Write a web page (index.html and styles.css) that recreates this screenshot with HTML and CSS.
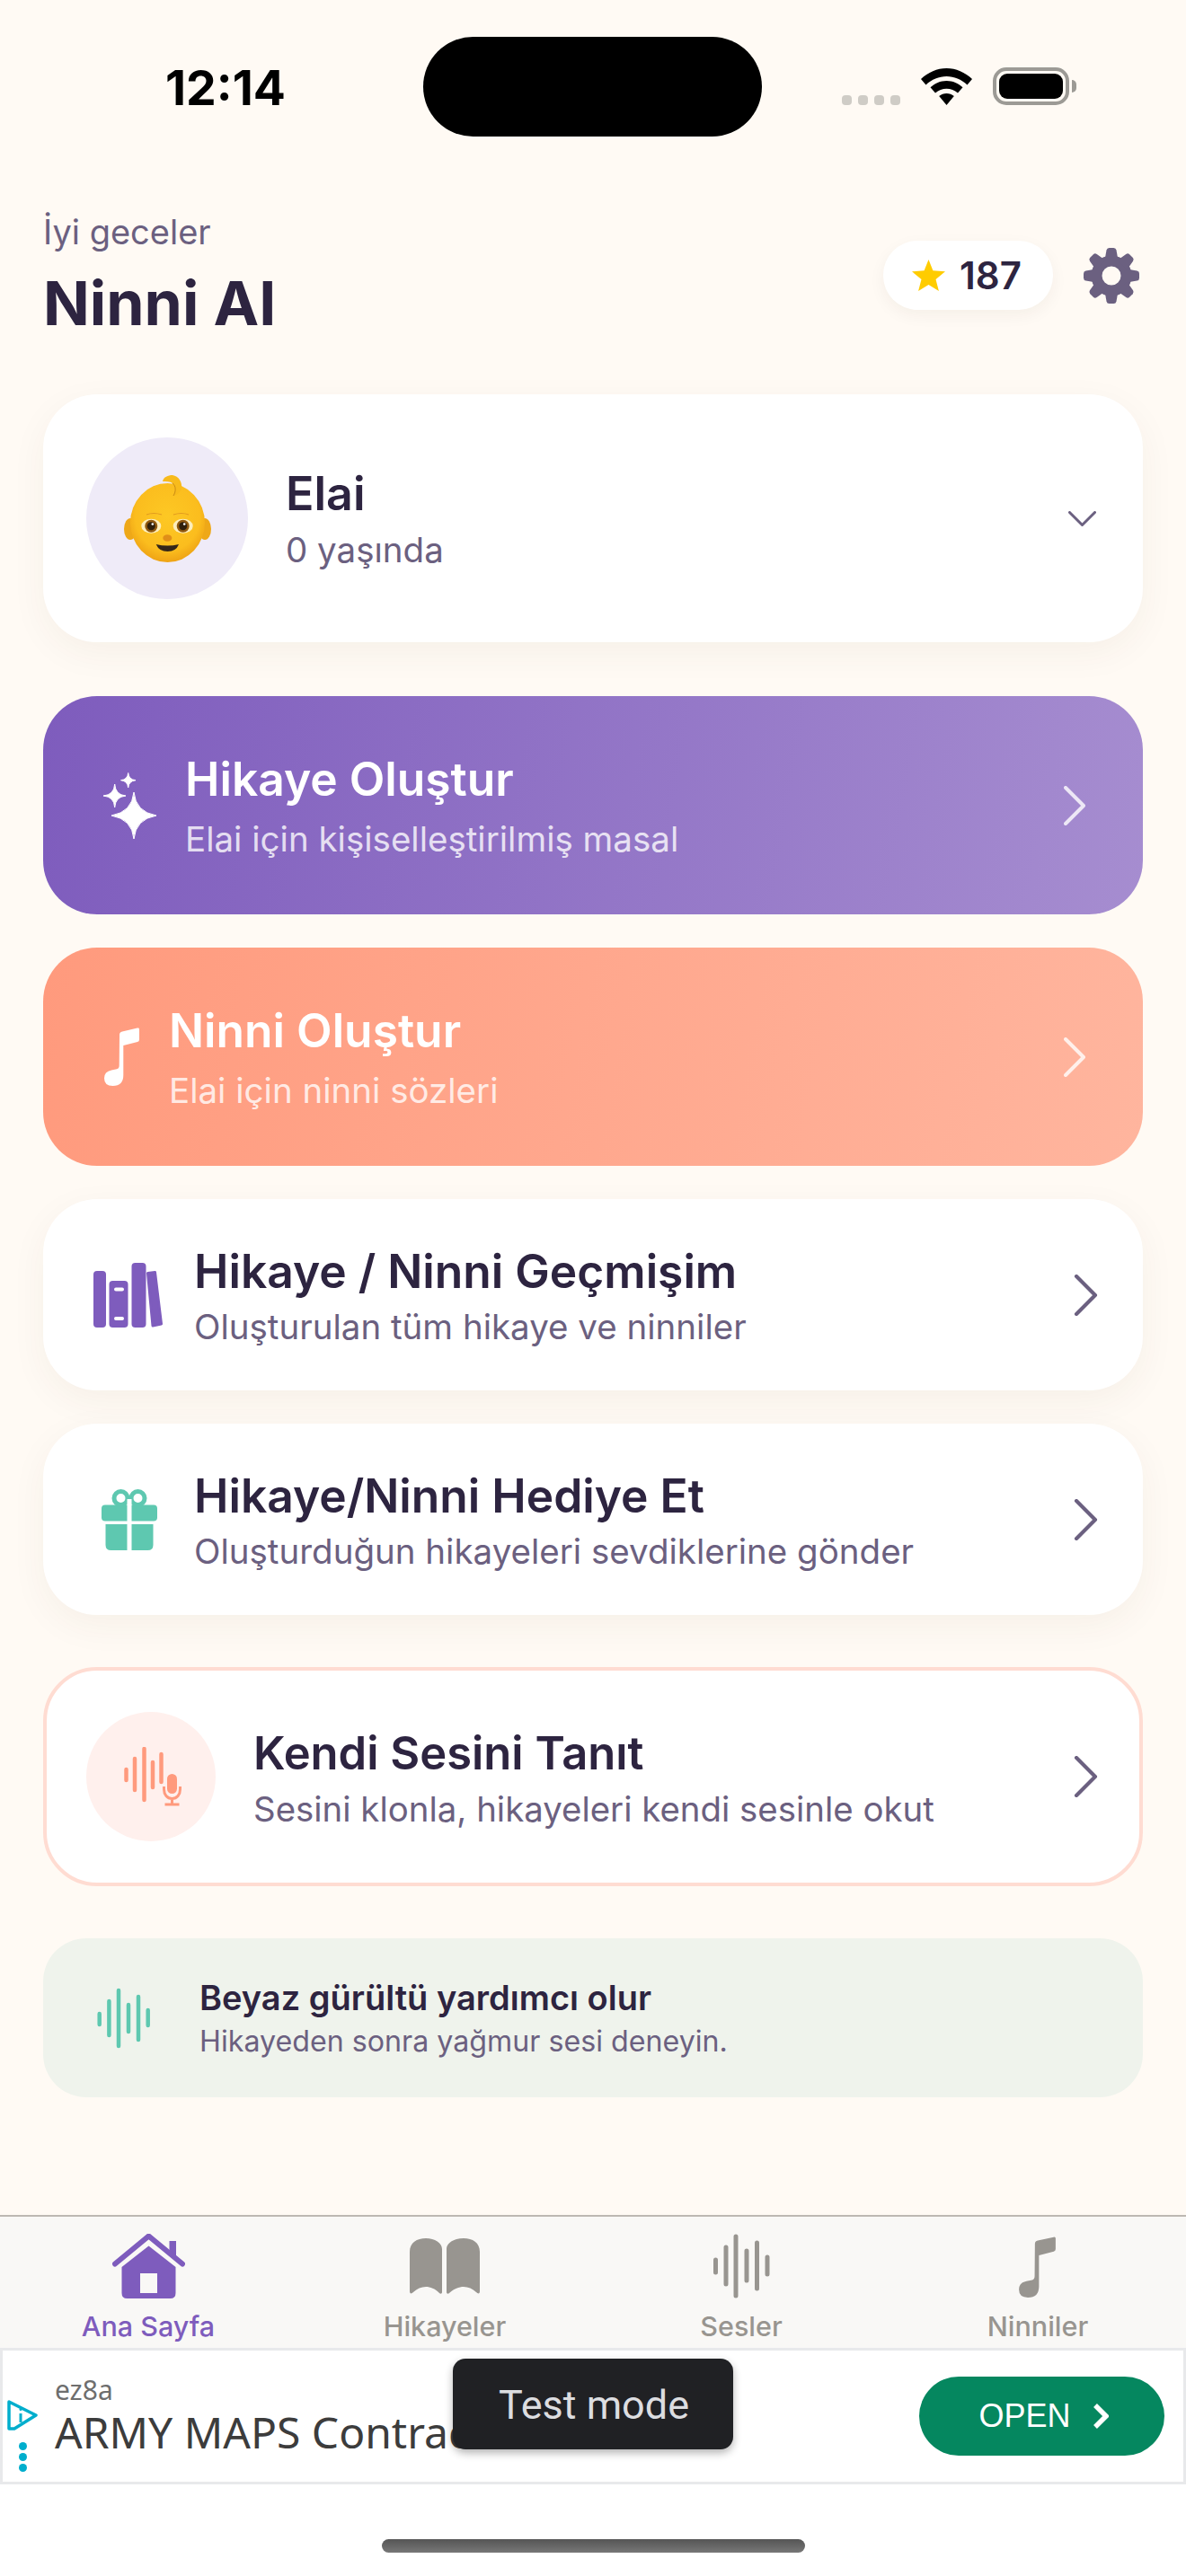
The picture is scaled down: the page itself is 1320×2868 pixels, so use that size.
FILE: index.html
```html
<!DOCTYPE html>
<html lang="tr">
<head>
    <meta charset="UTF-8">
    <meta name="viewport" content="width=device-width, initial-scale=1.0">
    <title>Ninni AI</title>
    <link rel="stylesheet" href="styles.css">
</head>
<body>
    <svg class="defs" width="0" height="0">
        <symbol id="note" viewBox="0 0 40 65">
            <path d="M17 8Q17 5 20 4.400L37 .6Q39 .2 39 2V13.500Q39 15.500 37 16L21.300 20V53Q21.300 65 9.500 65Q0 65 0 56.500Q0 49 8 47.500L14 46.300Q16.700 45.700 16.700 42Z"/>
        </symbol>
        <symbol id="chevron" viewBox="0 0 24 44">
            <path d="M2 2 22 22 2 42" fill="none" stroke="currentColor" stroke-width="4" stroke-linecap="round" stroke-linejoin="round"/>
        </symbol>
    </svg>

    <!-- status bar -->
    <div class="status">
        <div class="status-time">12:14</div>
        <div class="island"></div>
        <div class="status-icons">
            <div class="signal"><i></i><i></i><i></i><i></i></div>
            <svg class="wifi" viewBox="0 0 57 41">
                <path d="M28.500 0C39 0 49 4.500 57 12L51.500 18.500C45 12.500 37 9 28.500 9S12 12.500 5.500 18.500L0 12C8 4.500 18 0 28.500 0Z"/>
                <path d="M28.500 14C35.500 14 41.500 16.800 46.500 21.300L41 27.500C37.500 24.400 33 22.700 28.500 22.700S19.500 24.400 16 27.500L10.500 21.300C15.500 16.800 21.500 14 28.500 14Z"/>
                <path d="M28.500 28C31.500 28 34.500 29 36.800 31L28.500 41 20.200 31C22.500 29 25.500 28 28.500 28Z"/>
            </svg>
            <div class="battery"><div class="battery-fill"></div></div>
            <div class="battery-cap"></div>
        </div>
    </div>

    <main class="content">
        <header class="top">
            <div>
                <div class="greeting">İyi geceler</div>
                <h1 class="app-name">Ninni AI</h1>
            </div>
            <div class="top-actions">
                <div class="credits">
                    <svg class="star" viewBox="0 0 37 35"><path d="M18.500 0 23.400 12.300 37 13.300 26.500 22 29.900 35 18.500 28 7.100 35 10.500 22 0 13.300 13.600 12.300Z"/></svg>
                    <span>187</span>
                </div>
                <svg class="gear" viewBox="0 0 62 62">
                    <circle cx="31" cy="31" r="16.500" fill="none" stroke="#6b6080" stroke-width="12"/>
                    <g fill="#6b6080">
                        <path d="M23.500 14 25.500 2.500Q26 0 28.500 0H33.500Q36 0 36.500 2.500L38.500 14Z"/>
                        <path d="M23.500 14 25.500 2.500Q26 0 28.500 0H33.500Q36 0 36.500 2.500L38.500 14Z" transform="rotate(45 31 31)"/>
                        <path d="M23.500 14 25.500 2.500Q26 0 28.500 0H33.500Q36 0 36.500 2.500L38.500 14Z" transform="rotate(90 31 31)"/>
                        <path d="M23.500 14 25.500 2.500Q26 0 28.500 0H33.500Q36 0 36.500 2.500L38.500 14Z" transform="rotate(135 31 31)"/>
                        <path d="M23.500 14 25.500 2.500Q26 0 28.500 0H33.500Q36 0 36.500 2.500L38.500 14Z" transform="rotate(180 31 31)"/>
                        <path d="M23.500 14 25.500 2.500Q26 0 28.500 0H33.500Q36 0 36.500 2.500L38.500 14Z" transform="rotate(225 31 31)"/>
                        <path d="M23.500 14 25.500 2.500Q26 0 28.500 0H33.500Q36 0 36.500 2.500L38.500 14Z" transform="rotate(270 31 31)"/>
                        <path d="M23.500 14 25.500 2.500Q26 0 28.500 0H33.500Q36 0 36.500 2.500L38.500 14Z" transform="rotate(315 31 31)"/>
                    </g>
                </svg>
            </div>
        </header>

        <section class="card child-card">
            <div class="avatar">
                <svg class="baby" viewBox="0 0 97 98">
                    <defs>
                        <radialGradient id="skin" cx=".5" cy=".42" r=".62">
                            <stop offset="0" stop-color="#fdc824"/>
                            <stop offset=".7" stop-color="#fbbd1e"/>
                            <stop offset="1" stop-color="#eb9c12"/>
                        </radialGradient>
                    </defs>
                    <ellipse cx="7" cy="61" rx="7" ry="12" fill="#eea818"/>
                    <ellipse cx="90" cy="61" rx="7" ry="12" fill="#eea818"/>
                    <ellipse cx="48.500" cy="54" rx="41.500" ry="44" fill="url(#skin)"/>
                    <path d="M43 8C44 3 49 1 54 1 61 2 65 9 64 15 63 20 60 23 55 24 58 19 58 13 54 10 51 8 47 8 43 8Z" fill="#f8bb1c"/>
                    <path d="M55 24C58 19 58 13 54 10" fill="none" stroke="#c98a16" stroke-width="1"/>
                    <path d="M25 45Q33 42 42 45M55 45Q64 42 72 45" fill="none" stroke="#e09a20" stroke-width="1.200"/>
                    <ellipse cx="30.300" cy="57.700" rx="11" ry="8" fill="#fdeebc"/>
                    <ellipse cx="65.700" cy="57.700" rx="11" ry="8" fill="#fdeebc"/>
                    <circle cx="30.300" cy="57.700" r="7" fill="#90590f"/>
                    <circle cx="65.700" cy="57.700" r="7" fill="#90590f"/>
                    <circle cx="30.300" cy="57.700" r="4.500" fill="#2e1f0c"/>
                    <circle cx="65.700" cy="57.700" r="4.500" fill="#2e1f0c"/>
                    <circle cx="31.800" cy="55.500" r="1.300" fill="#fff"/>
                    <circle cx="67.200" cy="55.500" r="1.300" fill="#fff"/>
                    <ellipse cx="48.300" cy="71" rx="5" ry="3.800" fill="#e08f18"/>
                    <path d="M35.700 78Q48.500 81 61 78 58 86 48.500 86 39 86 35.700 78Z" fill="#33261a"/>
                </svg>
            </div>
            <div class="child-text">
                <div class="child-name">Elai</div>
                <div class="child-age">0 yaşında</div>
            </div>
            <svg class="chevron-down" viewBox="0 0 31 17"><path d="M1.500 1.500 15.500 15.500 29.500 1.500" fill="none" stroke="#6b6080" stroke-width="3" stroke-linecap="round" stroke-linejoin="round"/></svg>
        </section>

        <section class="cta cta-story">
            <svg class="cta-icon sparkles" viewBox="0 0 60 74" fill="#fff">
                <path d="M34 22Q36 44 59 48 36 52 34 74 32 52 9 48 32 44 34 22Z" stroke="#fff" stroke-width="1" stroke-linejoin="round"/>
                <path d="M12.700 13Q13.500 25 25 26 13.500 27 12.700 39 12 27 0 26 12 25 12.700 13Z" stroke="#fff" stroke-linejoin="round"/>
                <path d="M27.700 .500Q28.300 8 36 8.700 28.300 9.500 27.700 17 27 9.500 19.500 8.700 27 8 27.700 .500Z" stroke="#fff" stroke-linejoin="round"/>
            </svg>
            <div class="cta-text">
                <div class="cta-title">Hikaye Oluştur</div>
                <div class="cta-sub">Elai için kişiselleştirilmiş masal</div>
            </div>
            <svg class="chevron chevron-light"><use href="#chevron"/></svg>
        </section>

        <section class="cta cta-lullaby">
            <svg class="cta-icon note-icon" fill="#fff"><use href="#note"/></svg>
            <div class="cta-text">
                <div class="cta-title">Ninni Oluştur</div>
                <div class="cta-sub">Elai için ninni sözleri</div>
            </div>
            <svg class="chevron chevron-light"><use href="#chevron"/></svg>
        </section>

        <section class="card row-card row-history">
            <svg class="row-icon books" viewBox="0 0 77 72">
                <rect x="0" y="9" width="14" height="63" rx="4" fill="#7e5cbd"/>
                <rect x="17.500" y="20" width="21" height="52" rx="4" fill="#7e5cbd"/>
                <rect x="23" y="27.500" width="11" height="4" rx="2" fill="#fff"/>
                <rect x="23" y="60" width="11" height="4" rx="2" fill="#fff"/>
                <rect x="42.500" y="0" width="16" height="72" rx="4" fill="#7e5cbd"/>
                <path d="M60.500 11.500 68.500 10.500 75.500 68 66 70Z" fill="#7e5cbd" stroke="#7e5cbd" stroke-width="3" stroke-linejoin="round"/>
            </svg>
            <div class="row-text">
                <div class="row-title">Hikaye / Ninni Geçmişim</div>
                <div class="row-sub">Oluşturulan tüm hikaye ve ninniler</div>
            </div>
            <svg class="chevron chevron-dark"><use href="#chevron"/></svg>
        </section>

        <section class="card row-card row-gift">
            <svg class="row-icon gift" viewBox="0 0 62 68">
                <circle cx="21.500" cy="10" r="7.500" fill="none" stroke="#5ec8b0" stroke-width="5"/>
                <circle cx="40.500" cy="10" r="7.500" fill="none" stroke="#5ec8b0" stroke-width="5"/>
                <rect x="0" y="17.500" width="62" height="18" rx="4" fill="#5ec8b0"/>
                <path d="M4.500 39H57.500V62Q57.500 68 51.500 68H10.500Q4.500 68 4.500 62Z" fill="#5ec8b0"/>
                <rect x="28.500" y="11" width="5" height="57" fill="#fff"/>
            </svg>
            <div class="row-text">
                <div class="row-title">Hikaye/Ninni Hediye Et</div>
                <div class="row-sub">Oluşturduğun hikayeleri sevdiklerine gönder</div>
            </div>
            <svg class="chevron chevron-dark"><use href="#chevron"/></svg>
        </section>

        <section class="card voice-card">
            <div class="voice-badge">
                <svg class="voice-icon" viewBox="0 0 66 66">
                    <g fill="none" stroke="#ff9a7d" stroke-width="4.500" stroke-linecap="round">
                        <path d="M2.500 25V37M12 13V48M22.500 2V59M32 17V45M41.500 8V39"/>
                    </g>
                    <rect x="46" y="28" width="15" height="26" rx="7.500" fill="#fff0ed"/>
                    <rect x="48" y="30" width="11" height="22" rx="5.500" fill="#ff9a7d"/>
                    <path d="M44.500 44V47C44.500 53 48 57.500 53.500 57.500S62.500 53 62.500 47V44M53.500 57.500V63M45.500 64H61.500" fill="none" stroke="#ff9a7d" stroke-width="3"/>
                </svg>
            </div>
            <div class="row-text">
                <div class="row-title">Kendi Sesini Tanıt</div>
                <div class="row-sub">Sesini klonla, hikayeleri kendi sesinle okut</div>
            </div>
            <svg class="chevron chevron-dark"><use href="#chevron"/></svg>
        </section>

        <section class="tip">
            <svg class="tip-icon" viewBox="0 0 60 68" fill="none" stroke="#5ec8b0" stroke-width="4.500" stroke-linecap="round">
                <path d="M2.700 29V41M13.400 15V53M24 3V65M35 19V49M46 10V58M56.700 25V42"/>
            </svg>
            <div>
                <div class="tip-title">Beyaz gürültü yardımcı olur</div>
                <div class="tip-sub">Hikayeden sonra yağmur sesi deneyin.</div>
            </div>
        </section>
    </main>

    <nav class="tabs">
        <div class="tab tab-active">
            <svg class="tab-icon tab-home" viewBox="0 0 81 72">
                <path d="M63.500 8H71V24H63.500Z" fill="#7e5cbd"/>
                <path d="M3 33.500 40.500 2.500 78 33.500" fill="none" stroke="#7e5cbd" stroke-width="6" stroke-linecap="round" stroke-linejoin="round"/>
                <path fill-rule="evenodd" d="M40.500 13.500 70.500 37V66Q70.500 72 64.500 72H16.500Q10.500 72 10.500 66V37ZM31 44V66H50V44Z" fill="#7e5cbd"/>
            </svg>
            <span>Ana Sayfa</span>
        </div>
        <div class="tab">
            <svg class="tab-icon tab-book" viewBox="0 0 78 62" fill="#989590">
                <path d="M0 15C0 5 8 0 18 0 28 0 36 5 36 12V60C36 62 34 62 33 61 28 56 23 54 18 54 13 54 8 56 4 60 2 62 0 62 0 59Z"/>
                <path d="M78 15C78 5 70 0 60 0 50 0 41 5 41 12V60C41 62 43 62 44 61 49 56 55 54 60 54 65 54 70 56 74 60 76 62 78 62 78 59Z"/>
            </svg>
            <span>Hikayeler</span>
        </div>
        <div class="tab">
            <svg class="tab-icon tab-wave" viewBox="0 0 63 72" fill="none" stroke="#989590" stroke-width="5" stroke-linecap="round">
                <path d="M2.500 29V43M14 15V56M25 3V69M37 19V52M48.500 10V61M60 26V45"/>
            </svg>
            <span>Sesler</span>
        </div>
        <div class="tab">
            <svg class="tab-icon tab-note" fill="#989590"><use href="#note"/></svg>
            <span>Ninniler</span>
        </div>
    </nav>

    <aside class="ad">
        <div class="ad-info">
            <svg class="ad-choice" viewBox="0 0 34 35" fill="none" stroke="#00aecd" stroke-width="3.500" stroke-linejoin="round">
                <path d="M2 2 32 17 8 32H2Z"/>
                <path d="M15 15V25" stroke-width="3"/>
                <circle cx="15" cy="10.500" r="1.500" fill="#00aecd" stroke="none"/>
            </svg>
            <div class="ad-dots"><i></i><i></i><i></i></div>
        </div>
        <div class="ad-text">
            <div class="ad-domain">ez8a</div>
            <div class="ad-title">ARMY MAPS Contract</div>
        </div>
        <div class="ad-open">
            <span>OPEN</span>
            <svg class="ad-arrow" viewBox="0 0 18 28"><path d="M3 2 15 14 3 26" fill="none" stroke="#fff" stroke-width="5.500"/></svg>
        </div>
        <div class="toast">Test mode</div>
    </aside>

    <div class="home-area"><div class="home-bar"></div></div>
</body>
</html>
```

FILE: styles.css
```css
* {
    box-sizing: border-box;
}
body {
    margin: 0;
    width: 1320px;
    height: 2868px;
    overflow: hidden;
    display: flex;
    flex-direction: column;
    background-color: #fffaf4;
    color: #2d2440;
    font-family: Inter, "Noto Sans", sans-serif;
}
.defs {
    position: absolute;
}

/* status bar */
.status {
    display: flex;
    height: 152px;
    padding-top: 41px;
    flex-shrink: 0;
}
.status-time {
    width: 471px;
    padding: 30px 0 0 184px;
    font-size: 53.5px;
    line-height: 53px;
    font-weight: 700;
    color: #000;
}
.island {
    width: 377px;
    height: 111px;
    border-radius: 56px;
    background-color: #000;
}
.status-icons {
    display: flex;
    align-items: flex-end;
    height: 76px;
    padding-left: 89px;
}
.signal {
    display: flex;
    gap: 7px;
    margin-right: 23px;
}
.signal i {
    width: 11px;
    height: 11px;
    border-radius: 4px;
    background-color: #cfccc6;
}
.wifi {
    width: 57px;
    height: 41px;
    margin-right: 23px;
}
.battery {
    width: 85px;
    height: 42px;
    padding: 3px;
    border: 4px solid #9c9a95;
    border-radius: 15px;
}
.battery-fill {
    height: 100%;
    border-radius: 9px;
    background-color: #000;
}
.battery-cap {
    width: 5px;
    height: 14px;
    margin: 0 0 14px 3px;
    border-radius: 0 7px 7px 0;
    background-color: #9c9a95;
}

/* main column */
.content {
    flex: 1;
    padding: 0 48px;
}
.top {
    display: flex;
    justify-content: space-between;
    align-items: flex-start;
    height: 287px;
    padding-top: 83px;
}
.greeting {
    font-size: 38px;
    line-height: 46px;
    color: #6b6080;
}
.app-name {
    margin: 15px 0 0;
    font-size: 68px;
    line-height: 82px;
    font-weight: 700;
    color: #2d2440;
}
.top-actions {
    display: flex;
    align-items: center;
    gap: 34px;
    margin: 33px 4px 0 0;
}
.credits {
    display: flex;
    align-items: center;
    gap: 16px;
    width: 189px;
    height: 77px;
    padding-left: 32px;
    border-radius: 38px;
    background-color: #fff;
    box-shadow: 0 6px 18px rgba(60, 40, 20, 0.05);
    font-size: 42px;
    font-weight: 600;
}
.star {
    width: 37px;
    height: 35px;
    fill: #ffcc00;
}
.gear {
    width: 62px;
    height: 62px;
}

.card {
    display: flex;
    align-items: center;
    border-radius: 60px;
    background-color: #fff;
    box-shadow: 0 12px 40px rgba(70, 50, 20, 0.05);
}
.child-card {
    height: 276px;
    padding: 0 52px 0 48px;
}
.avatar {
    display: flex;
    align-items: center;
    justify-content: center;
    width: 180px;
    height: 180px;
    border-radius: 50%;
    background-color: #efebf8;
}
.baby {
    width: 97px;
    height: 98px;
}
.child-text {
    flex: 1;
    padding-left: 42px;
}
.child-name {
    font-size: 52px;
    line-height: 62px;
    font-weight: 600;
}
.child-age {
    margin-top: 8px;
    font-size: 38.500px;
    line-height: 46px;
    color: #6b6080;
}
.chevron-down {
    width: 31px;
    height: 17px;
}

/* gradient buttons */
.cta {
    display: flex;
    align-items: center;
    height: 243px;
    padding-right: 64px;
    border-radius: 60px;
    color: #fff;
}
.cta-story {
    margin-top: 60px;
    padding-left: 67px;
    background: linear-gradient(100deg, #7e5cbd, #a68dd0);
}
.cta-lullaby {
    margin-top: 37px;
    padding-left: 68px;
    background: linear-gradient(100deg, #ff9a7d, #ffb59e);
}
.cta-icon {
    flex-shrink: 0;
}
.sparkles {
    width: 60px;
    height: 74px;
    margin-right: 31px;
}
.note-icon {
    width: 40px;
    height: 65px;
    margin-right: 32px;
}
.cta-text {
    flex: 1;
    padding-bottom: 2px;
}
.cta-title {
    font-size: 51.500px;
    line-height: 62px;
    font-weight: 600;
}
.cta-sub {
    margin-top: 14px;
    font-size: 38.500px;
    line-height: 44px;
    color: rgba(255, 255, 255, 0.8);
}
.chevron {
    width: 24px;
    height: 44px;
    flex-shrink: 0;
}
.chevron-light {
    color: rgba(255, 255, 255, 0.8);
}
.chevron-dark {
    color: #6b6080;
    width: 27px;
    height: 46px;
}

/* list rows */
.row-card {
    height: 213px;
    padding: 0 50px 0 56px;
}
.row-history {
    margin-top: 37px;
}
.row-gift {
    margin-top: 37px;
}
.row-icon {
    flex-shrink: 0;
}
.books {
    width: 77px;
    height: 72px;
    margin-right: 35px;
}
.gift {
    width: 62px;
    height: 68px;
    margin: 0 41px 0 9px;
}
.row-text {
    flex: 1;
}
.row-title {
    font-size: 51.500px;
    line-height: 62px;
    font-weight: 600;
}
.row-sub {
    margin-top: 8px;
    font-size: 38.500px;
    line-height: 46px;
    color: #6b6080;
}
.voice-card {
    height: 244px;
    margin-top: 58px;
    padding: 0 46px 0 44px;
    border: 4px solid #ffdcd2;
    box-shadow: none;
}
.voice-card .row-text {
    padding-top: 2px;
}
.voice-card .row-title {
    font-size: 50.700px;
}
.voice-card .row-sub {
    font-size: 38.400px;
}
.voice-badge {
    display: flex;
    align-items: center;
    justify-content: center;
    width: 144px;
    height: 144px;
    margin-right: 42px;
    border-radius: 50%;
    background-color: #fff0ed;
}
.voice-icon {
    width: 66px;
    height: 66px;
    margin-left: 5px;
}
.tip {
    display: flex;
    align-items: center;
    height: 177px;
    margin-top: 58px;
    padding-left: 60px;
    border-radius: 48px;
    background-color: #eff3ec;
}
.tip-icon {
    width: 60px;
    height: 68px;
    margin-right: 54px;
}
.tip-title {
    font-size: 38px;
    line-height: 44px;
    font-weight: 600;
}
.tip-sub {
    margin-top: 8px;
    font-size: 32.200px;
    line-height: 38px;
    color: #6b6080;
}

/* tab bar */
.tabs {
    display: flex;
    height: 148px;
    flex-shrink: 0;
    border-top: 2px solid #bdb8b2;
    background-color: #f9f8f6;
}
.tab {
    flex: 1;
    display: flex;
    flex-direction: column;
    align-items: center;
    height: 146px;
    font-size: 30.500px;
    line-height: 36px;
    font-weight: 500;
    color: #989590;
}
.tab span {
    margin-top: auto;
    padding-bottom: 6px;
}
.tab-active {
    color: #7e5cbd;
}
.tab-icon {
    flex-shrink: 0;
}
.tab-home {
    width: 81px;
    height: 72px;
    margin-top: 19px;
}
.tab-book {
    width: 78px;
    height: 62px;
    margin-top: 24px;
}
.tab-wave {
    width: 63px;
    height: 72px;
    margin-top: 19px;
}
.tab-note {
    width: 42px;
    height: 68px;
    margin-top: 22px;
}

/* banner ad */
.ad {
    position: relative;
    display: flex;
    align-items: center;
    height: 152px;
    flex-shrink: 0;
    border: 3px solid #e8e9eb;
    background-color: #fff;
}
.ad-info {
    width: 58px;
    padding: 44px 0 0 5px;
}
.ad-choice {
    display: block;
    width: 34px;
    height: 35px;
}
.ad-dots {
    display: flex;
    flex-direction: column;
    gap: 3px;
    width: 9px;
    margin: 12px 0 0 13px;
}
.ad-dots i {
    width: 9px;
    height: 9px;
    border-radius: 50%;
    background-color: #00aecd;
}
.ad-text {
    padding-bottom: 3px;
    font-family: "Noto Sans", sans-serif;
    white-space: nowrap;
}
.ad-domain {
    font-size: 30px;
    line-height: 38px;
    color: #6e6e6e;
}
.ad-title {
    margin-top: 1px;
    font-size: 48px;
    line-height: 54px;
    color: #3c3c3c;
}
.ad-open {
    display: flex;
    align-items: center;
    justify-content: center;
    gap: 24px;
    width: 273px;
    height: 88px;
    margin-left: auto;
    margin-right: 21px;
    padding-left: 4px;
    border-radius: 44px;
    background-color: #05875f;
    color: #fff;
    font-family: "Liberation Sans", sans-serif;
    font-size: 36px;
}
.ad-arrow {
    width: 18px;
    height: 28px;
}
.toast {
    position: absolute;
    left: 501px;
    top: 9px;
    width: 312px;
    height: 101px;
    padding: 3px 0 0 51px;
    border-radius: 14px;
    background-color: #202124;
    box-shadow: 0 4px 10px rgba(0, 0, 0, 0.3);
    color: #dcdde0;
    font-family: Roboto, sans-serif;
    font-size: 45px;
    line-height: 98px;
}

.home-area {
    height: 102px;
    flex-shrink: 0;
    background-color: #fff;
}
.home-bar {
    width: 471px;
    height: 15px;
    margin: 61px 0 0 425px;
    border-radius: 8px;
    background: linear-gradient(#555, #777);
}
```
